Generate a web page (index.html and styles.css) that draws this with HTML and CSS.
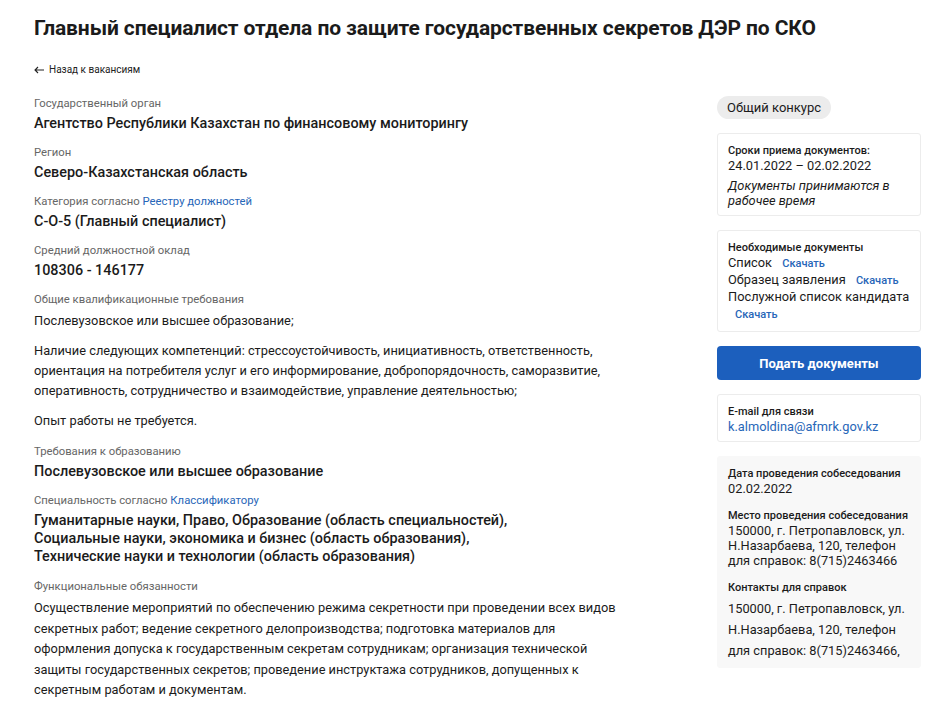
FILE: index.html
```html
<!DOCTYPE html>
<html lang="ru">

<head>
    <meta charset="UTF-8">
    <meta name="viewport" content="width=device-width, initial-scale=1.0">
    <title>Вакансия</title>
    <link rel="stylesheet" href="styles.css">
</head>

<body>
    <div class="page">
        <h1>Главный специалист отдела по защите государственных секретов ДЭР по СКО</h1>
        <a class="back" href="#">
            <svg width="10" height="8" viewBox="0 0 10 8" fill="none" stroke="#222" stroke-width="1.1">
                <path d="M10 4H1M4 1L1 4l3 3" />
            </svg>
            Назад к вакансиям
        </a>

        <div class="content">
            <div class="details">
                <div class="field">
                    <div class="label">Государственный орган</div>
                    <div class="value">Агентство Республики Казахстан по финансовому мониторингу</div>
                </div>
                <div class="field">
                    <div class="label">Регион</div>
                    <div class="value">Северо-Казахстанская область</div>
                </div>
                <div class="field">
                    <div class="label">Категория согласно <a href="#">Реестру должностей</a></div>
                    <div class="value">С-О-5 (Главный специалист)</div>
                </div>
                <div class="field">
                    <div class="label">Средний должностной оклад</div>
                    <div class="value">108306 - 146177</div>
                </div>
                <div class="field wide">
                    <div class="label">Общие квалификационные требования</div>
                    <p class="text">Послевузовское или высшее образование;</p>
                    <p class="text">Наличие следующих компетенций: стрессоустойчивость, инициативность, ответственность, ориентация на потребителя услуг и его информирование, добропорядочность, саморазвитие, оперативность, сотрудничество и взаимодействие, управление деятельностью;</p>
                    <p class="text">Опыт работы не требуется.</p>
                </div>
                <div class="field">
                    <div class="label">Требования к образованию</div>
                    <div class="value">Послевузовское или высшее образование</div>
                </div>
                <div class="field wide">
                    <div class="label">Специальность согласно <a href="#">Классификатору</a></div>
                    <div class="value">Гуманитарные науки, Право, Образование (область специальностей),<br>
                        Социальные науки, экономика и бизнес (область образования),<br>
                        Технические науки и технологии (область образования)</div>
                </div>
                <div class="field">
                    <div class="label">Функциональные обязанности</div>
                    <p class="text duties">Осуществление мероприятий по обеспечению режима секретности при проведении всех видов секретных работ; ведение секретного делопроизводства; подготовка материалов для оформления допуска к государственным секретам сотрудникам; организация технической защиты государственных секретов; проведение инструктажа сотрудников, допущенных к секретным работам и документам.</p>
                </div>
            </div>

            <div class="sidebar">
                <span class="badge">Общий конкурс</span>

                <div class="card">
                    <div class="card-title">Сроки приема документов:</div>
                    <div class="card-text">24.01.2022 – 02.02.2022</div>
                    <div class="card-note">Документы принимаются в рабочее время</div>
                </div>

                <div class="card docs">
                    <div class="card-title">Необходимые документы</div>
                    <div class="doc">Список <a class="download" href="#">Скачать</a></div>
                    <div class="doc">Образец заявления <a class="download" href="#">Скачать</a></div>
                    <div class="doc">Послужной список кандидата <a class="download" href="#">Скачать</a></div>
                </div>

                <button class="submit">Подать документы</button>

                <div class="card">
                    <div class="card-title">E-mail для связи</div>
                    <a class="email" href="#">k.almoldina@afmrk.gov.kz</a>
                </div>

                <div class="card info">
                    <div class="card-title">Дата проведения собеседования</div>
                    <div class="card-text">02.02.2022</div>

                    <div class="card-title spaced">Место проведения собеседования</div>
                    <div class="card-text">150000, г. Петропавловск, ул. Н.Назарбаева, 120, телефон для справок: 8(715)2463466</div>

                    <div class="card-title spaced">Контакты для справок</div>
                    <div class="card-text contacts">150000, г. Петропавловск, ул. Н.Назарбаева, 120, телефон для справок: 8(715)2463466,</div>
                </div>
            </div>
        </div>
    </div>
</body>

</html>
```

FILE: styles.css
```css
body {
    margin: 0;
    background-color: #fff;
    color: #1b1b1b;
    font-family: Roboto, "Noto Sans", sans-serif;
}

a {
    color: #2766b8;
    text-decoration: none;
}

.page {
    padding: 14px 13px 0 34px;
}

h1 {
    margin: 0;
    font-size: 21px;
    line-height: 28px;
    font-weight: 700;
    letter-spacing: -0.1px;
}

.back {
    display: inline-flex;
    align-items: center;
    gap: 5px;
    margin-top: 21px;
    font-size: 10px;
    line-height: 14px;
    color: #222;
}

.content {
    display: flex;
    justify-content: space-between;
    margin-top: 19px;
}

.details {
    width: 585px;
}

.field {
    margin-bottom: 13px;
}

.field.wide {
    margin-bottom: 14px;
}

.label {
    font-size: 11.3px;
    line-height: 14px;
    color: #666;
    margin-bottom: 4px;
}

.value {
    font-size: 14.4px;
    line-height: 18px;
    font-weight: 500;
}

.text {
    margin: 0 0 10px;
    font-size: 12.8px;
    line-height: 20px;
}

.text:last-child {
    margin-bottom: 0;
}

.duties {
    line-height: 20.5px;
}

.sidebar {
    width: 204px;
    margin-top: -1px;
    display: flex;
    flex-direction: column;
    align-items: flex-start;
    gap: 14px;
}

.badge {
    background-color: #ececec;
    border-radius: 12px;
    padding: 0 10px;
    font-size: 13px;
    line-height: 23px;
}

.card {
    align-self: stretch;
    border: 1px solid #ececec;
    border-radius: 3px;
    padding: 10px 8px 7px 10px;
    font-size: 12.8px;
    line-height: 15px;
}

.card-title {
    font-size: 11px;
    line-height: 14px;
    font-weight: 500;
}

.card-note {
    margin-top: 5px;
    font-style: italic;
}

.docs {
    padding-bottom: 9px;
}

.docs .card-title {
    line-height: 13px;
}

.doc {
    line-height: 17px;
}

.download {
    margin-left: 7px;
    white-space: nowrap;
    font-size: 11px;
    line-height: 14px;
    font-weight: 500;
}

.submit {
    align-self: stretch;
    height: 34px;
    border: none;
    border-radius: 4px;
    background-color: #1c5fbd;
    color: #fff;
    font-family: inherit;
    font-size: 13px;
    font-weight: 700;
}

.email {
    display: block;
}

.info {
    background-color: #f8f8f8;
    border-color: #f8f8f8;
    padding-bottom: 6px;
}

.spaced {
    margin-top: 13px;
}

.contacts {
    margin-top: 3px;
    line-height: 21px;
}
```
